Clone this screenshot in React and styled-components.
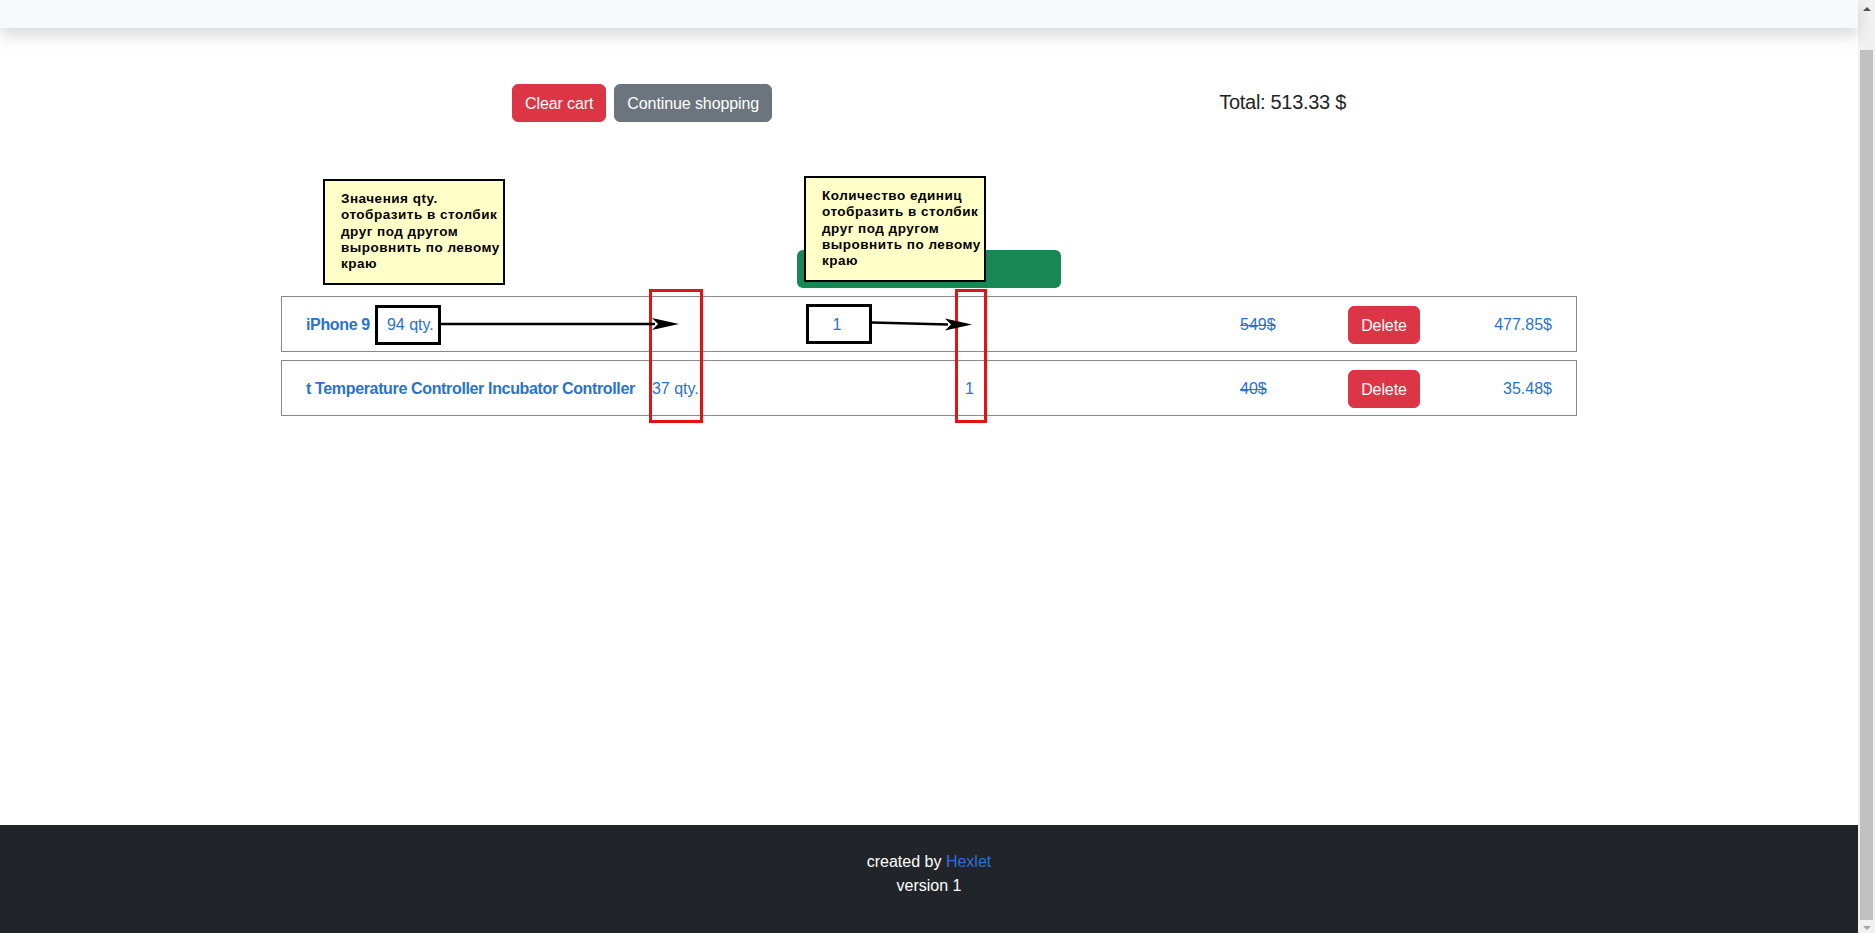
import React from "react";
import styled, { createGlobalStyle } from "styled-components";

const GlobalStyle = createGlobalStyle`
  html, body {
    margin: 0;
    padding: 0;
    height: 933px;
    overflow: hidden;
    background: #fff;
  }
  body {
    font-family: "Liberation Sans", Arial, sans-serif;
    font-size: 16px;
    line-height: 24px;
    color: #212529;
  }
  * { box-sizing: border-box; }
`;

const Shell = styled.div`
  display: flex;
  height: 933px;
  width: 100%;
`;

const PageColumn = styled.div`
  position: relative;
  flex: 1;
  display: flex;
  flex-direction: column;
  min-width: 0;
`;

const Navbar = styled.header`
  position: relative;
  z-index: 1;
  height: 28px;
  flex: none;
  background: #f8f9fa;
  box-shadow: 0 8px 16px rgba(0, 0, 0, 0.15);
`;

const Main = styled.main`
  flex: 1;
`;

const Container = styled.div`
  width: 1320px;
  margin: 0 auto;
  padding: 0 12px;
`;

const TopBar = styled.div`
  display: flex;
  justify-content: space-between;
  align-items: center;
  padding: 0 231px;
  margin-top: 56px;
`;

const ButtonGroup = styled.div`
  display: flex;
  gap: 8px;
`;

const Button = styled.button`
  font-family: inherit;
  font-size: 16px;
  line-height: 24px;
  padding: 7px 12px 5px;
  border: 1px solid ${(p) => p.$bg};
  border-radius: 6px;
  background: ${(p) => p.$bg};
  color: #fff;
  cursor: pointer;
  white-space: nowrap;
  letter-spacing: -0.1px;
`;

const Total = styled.h5`
  margin: 0;
  font-size: 20px;
  font-weight: 500;
  line-height: 24px;
  letter-spacing: -0.3px;
  color: #212529;
  padding-bottom: 2px;
`;

const OrderBar = styled.div`
  width: 264px;
  height: 38px;
  margin: 128px auto 0;
  border-radius: 6px;
  background: #198754;
`;

const CartList = styled.div`
  margin-top: 8px;
  display: flex;
  flex-direction: column;
  gap: 8px;
`;

const Row = styled.div`
  display: flex;
  justify-content: space-between;
  align-items: center;
  height: 56px;
  padding: 9px 24px 7px;
  border: 1px solid #8a8a8a;
  color: #2a72cc;
`;

const TitleGroup = styled.div`
  display: flex;
  gap: 17px;
  white-space: nowrap;
`;

const Title = styled.span`
  font-weight: 700;
  letter-spacing: -0.35px;
`;

const Plain = styled.span``;

const PriceGroup = styled.div`
  display: grid;
  grid-template-columns: 108px 72px 132px;
  align-items: center;
`;

const OldPrice = styled.span`
  text-decoration: line-through;
`;

const NewPrice = styled.span`
  justify-self: end;
`;

const Footer = styled.footer`
  flex: none;
  height: 108px;
  background: #212529;
  color: #fff;
  text-align: center;
  padding-top: 25px;
  font-size: 16px;
  line-height: 24px;
`;

const FooterLink = styled.a`
  color: #2f6fd6;
  text-decoration: none;
`;

/* annotation overlays */
const Note = styled.div`
  position: absolute;
  z-index: 3;
  left: ${(p) => p.$x}px;
  top: ${(p) => p.$y}px;
  width: 182px;
  height: 106px;
  border: 2px solid #000;
  background: #ffffc8;
  padding: 10px 0 0 16px;
  font-family: "Liberation Sans", Arial, sans-serif;
  font-weight: 700;
  font-size: 13.5px;
  line-height: 16.3px;
  letter-spacing: 0.5px;
  color: #000;
  white-space: nowrap;
`;

const Frame = styled.div`
  position: absolute;
  z-index: 3;
  left: ${(p) => p.$x}px;
  top: ${(p) => p.$y}px;
  width: ${(p) => p.$w}px;
  height: ${(p) => p.$h}px;
  border: 3px solid ${(p) => p.$color};
`;

const ArrowSvg = styled.svg`
  position: absolute;
  z-index: 3;
  left: ${(p) => p.$x}px;
  top: ${(p) => p.$y}px;
  overflow: visible;
`;

/* scrollbar */
const Scrollbar = styled.div`
  width: 17px;
  flex: none;
  display: flex;
  flex-direction: column;
  background: #f1f1f1;
`;

const ScrollButton = styled.div`
  height: ${(p) => p.$h}px;
  display: flex;
  justify-content: center;
  align-items: ${(p) => (p.$down ? "flex-start" : "center")};
  padding-top: ${(p) => (p.$down ? 3 : 0)}px;
`;

const UpGlyph = styled.span`
  width: 0;
  height: 0;
  border-left: 4px solid transparent;
  border-right: 4px solid transparent;
  border-bottom: 4px solid #505050;
`;

const DownGlyph = styled.span`
  width: 0;
  height: 0;
  border-left: 4px solid transparent;
  border-right: 4px solid transparent;
  border-top: 4px solid #a3a3a3;
`;

const ScrollTrack = styled.div`
  flex: 1;
  display: flex;
  padding: 33px 2px 3px;
`;

const Thumb = styled.div`
  flex: 1;
  background: #c1c1c1;
`;

const Arrow = ({ x, y, w, x2, y1, y2 }) => (
  <ArrowSvg $x={x} $y={y} width={w} height={20}>
    <line x1="0" y1={y1} x2={x2 - 24} y2={y2} stroke="#000" strokeWidth="2.6" />
    <path
      d={`M${x2} ${y2} L${x2 - 27} ${y2 - 6} L${x2 - 21} ${y2} L${x2 - 27} ${y2 + 6} Z`}
      fill="#000"
    />
  </ArrowSvg>
);

const items = [
  { title: "iPhone 9", stock: 94, count: 1, price: 549, final: "477.85" },
  {
    title: "t Temperature Controller Incubator Controller",
    stock: 37,
    count: 1,
    price: 40,
    final: "35.48",
  },
];

export default function App() {
  return (
    <>
      <GlobalStyle />
      <Shell>
        <PageColumn>
          <Navbar />
          <Main>
            <Container>
              <TopBar>
                <ButtonGroup>
                  <Button $bg="#dc3545">Clear cart</Button>
                  <Button $bg="#6c757d">Continue shopping</Button>
                </ButtonGroup>
                <Total>Total: 513.33 $</Total>
              </TopBar>
              <OrderBar />
              <CartList>
                {items.map((it) => (
                  <Row key={it.title}>
                    <TitleGroup>
                      <Title>{it.title}</Title>
                      <Plain>{it.stock} qty.</Plain>
                    </TitleGroup>
                    <Plain>{it.count}</Plain>
                    <PriceGroup>
                      <OldPrice>{it.price}$</OldPrice>
                      <Button $bg="#dc3545">Delete</Button>
                      <NewPrice>{it.final}$</NewPrice>
                    </PriceGroup>
                  </Row>
                ))}
              </CartList>
            </Container>
          </Main>
          <Footer>
            <div>
              created by <FooterLink href="#">Hexlet</FooterLink>
            </div>
            <div>version 1</div>
          </Footer>

          <Note $x={323} $y={179}>
            Значения qty.
            <br />
            отобразить в столбик
            <br />
            друг под другом
            <br />
            выровнить по левому
            <br />
            краю
          </Note>
          <Note $x={804} $y={176}>
            Количество единиц
            <br />
            отобразить в столбик
            <br />
            друг под другом
            <br />
            выровнить по левому
            <br />
            краю
          </Note>
          <Frame $x={375} $y={305} $w={66} $h={40} $color="#000" />
          <Frame $x={806} $y={304} $w={66} $h={40} $color="#000" />
          <Frame $x={649} $y={289} $w={54} $h={134} $color="#e31414" />
          <Frame $x={955} $y={289} $w={32} $h={134} $color="#e31414" />
          <Arrow x={441} y={314} w={240} x2={238} y1={10} y2={10} />
          <Arrow x={872} y={313} w={102} x2={100} y1={9.5} y2={11.5} />
        </PageColumn>
        <Scrollbar>
          <ScrollButton $h={17}>
            <UpGlyph />
          </ScrollButton>
          <ScrollTrack>
            <Thumb />
          </ScrollTrack>
          <ScrollButton $h={10} $down>
            <DownGlyph />
          </ScrollButton>
        </Scrollbar>
      </Shell>
    </>
  );
}
